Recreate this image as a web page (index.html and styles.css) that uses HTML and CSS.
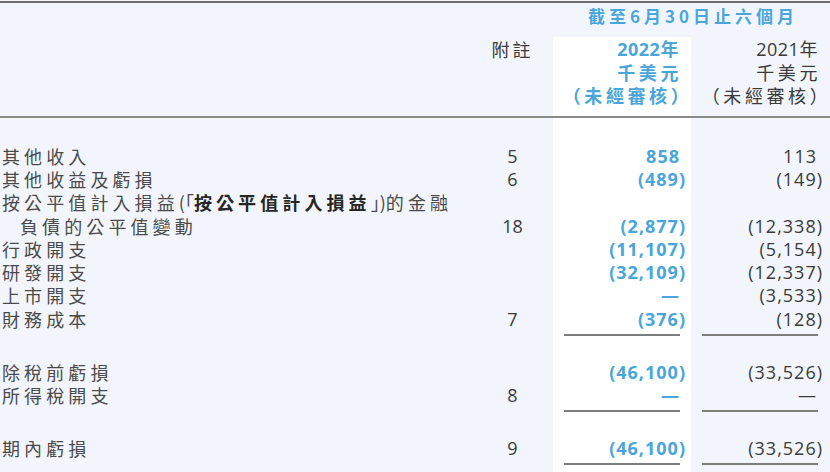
FILE: index.html
```html
<!DOCTYPE html>
<html lang="zh-Hant">
<head>
<meta charset="utf-8">
<link rel="stylesheet" href="styles.css">
</head>
<body>
<div class="page">
  <div class="row period-row">
    <div class="period">截至6月30日止六個月</div>
  </div>
  <div class="table">
    <div class="row head">
      <div class="label"></div>
      <div class="note">附註</div>
      <div class="val cur"><span class="num">2022</span>年<br>千美元<br>（未經審核<span class="hp">）</span></div>
      <div class="val prev"><span class="num">2021</span>年<br>千美元<br>（未經審核<span class="hp">）</span></div>
    </div>
    <div class="body">
      <div class="row"><div class="label">其他收入</div><div class="note">5</div><div class="val cur">858</div><div class="val prev">113</div></div>
      <div class="row"><div class="label">其他收益及虧損</div><div class="note">6</div><div class="val cur">(489<span class="cp">)</span></div><div class="val prev">(149<span class="cp">)</span></div></div>
      <div class="row"><div class="label wide">按公平值計入損益<span class="br">(「</span><b>按公平值計入損益</b><span class="br">」)</span>的金融</div></div>
      <div class="row"><div class="label indent">負債的公平值變動</div><div class="note">18</div><div class="val cur">(2,877<span class="cp">)</span></div><div class="val prev">(12,338<span class="cp">)</span></div></div>
      <div class="row"><div class="label">行政開支</div><div class="note"></div><div class="val cur">(11,107<span class="cp">)</span></div><div class="val prev">(5,154<span class="cp">)</span></div></div>
      <div class="row"><div class="label">研發開支</div><div class="note"></div><div class="val cur">(32,109<span class="cp">)</span></div><div class="val prev">(12,337<span class="cp">)</span></div></div>
      <div class="row"><div class="label">上市開支</div><div class="note"></div><div class="val cur">—</div><div class="val prev">(3,533<span class="cp">)</span></div></div>
      <div class="row"><div class="label">財務成本</div><div class="note">7</div><div class="val cur">(376<span class="cp">)</span></div><div class="val prev">(128<span class="cp">)</span></div></div>
      <div class="row rule"><div></div><div></div><div class="line"></div><div class="line"></div></div>
      <div class="row"><div class="label">除稅前虧損</div><div class="note"></div><div class="val cur">(46,100<span class="cp">)</span></div><div class="val prev">(33,526<span class="cp">)</span></div></div>
      <div class="row"><div class="label">所得稅開支</div><div class="note">8</div><div class="val cur">—</div><div class="val prev">—</div></div>
      <div class="row rule"><div></div><div></div><div class="line"></div><div class="line"></div></div>
      <div class="row"><div class="label">期內虧損</div><div class="note">9</div><div class="val cur">(46,100<span class="cp">)</span></div><div class="val prev">(33,526<span class="cp">)</span></div></div>
      <div class="row rule"><div></div><div></div><div class="line"></div><div class="line"></div></div>
    </div>
  </div>
</div>
</body>
</html>
```
FILE: styles.css
```css
html, body {
  margin: 0;
  padding: 0;
  background: #f2f6fc;
}
body {
  font-family: "Noto Sans CJK TC", "Noto Sans CJK SC", sans-serif;
  color: #4a4a4a;
}
.page {
  width: 830px;
  height: 471px;
  margin-top: 1px;
  border-top: 2px solid #6f6f6f;
  display: flex;
  flex-direction: column;
  overflow: hidden;
}
.page > *,
.body > * {
  flex-shrink: 0;
}
.row {
  display: grid;
  grid-template-columns: 472px 81px 138px 139px;
  font-size: 18px;
  line-height: 23.3px;
}
.period-row {
  height: 34px;
}
.period {
  grid-column: 3 / 5;
  text-align: center;
  color: #4aa6da;
  font-weight: 700;
  font-size: 17px;
  letter-spacing: 4px;
  line-height: 23px;
  padding-top: 1px;
  padding-left: 3px;
}
.table {
  flex: 1 0 auto;
  background: linear-gradient(90deg, transparent 553px, #ffffff 553px, #ffffff 691px, transparent 691px);
}
.head {
  padding-top: 1.4px;
  padding-bottom: 8px;
  border-bottom: 2px solid #8a8a8a;
}
.head .val {
  letter-spacing: 3.6px;
}
.head .num {
  letter-spacing: 0.5px;
}
.head .note {
  letter-spacing: 3px;
  font-family: "Noto Sans CJK TC", sans-serif;
  padding-left: 0;
}
.head .cur,
.head .prev {
  padding-right: 9px;
}
.body {
  padding-top: 26.4px;
}
.label {
  padding-left: 2px;
  letter-spacing: 4.1px;
  white-space: nowrap;
}
.label b {
  font-weight: 700;
  color: #262626;
}
.label .br {
  font-feature-settings: "halt";
  letter-spacing: 0;
}
.indent {
  padding-left: 20px;
}
.note {
  text-align: center;
  font-family: "Open Sans", "Noto Sans CJK TC", sans-serif;
  color: #3a3a3a;
  padding-left: 0;
}
.val {
  text-align: right;
  font-family: "Open Sans", "Noto Sans CJK TC", sans-serif;
  letter-spacing: 1px;
  white-space: nowrap;
}
.cur {
  color: #4aa6da;
  font-weight: 700;
  padding-right: 11px;
}
.prev {
  color: #3a3a3a;
  padding-right: 13px;
}
.cp {
  margin-right: -6px;
}
.hp {
  margin-right: -10.3px;
}
.rule {
  padding-top: 2.5px;
  height: 29.6px;
  box-sizing: border-box;
}
.rule .line {
  border-top: 2px solid #7d7d7d;
  margin: 0 11px;
  height: 0;
}
.rule .line + .line {
  margin-right: 12px;
}
```
